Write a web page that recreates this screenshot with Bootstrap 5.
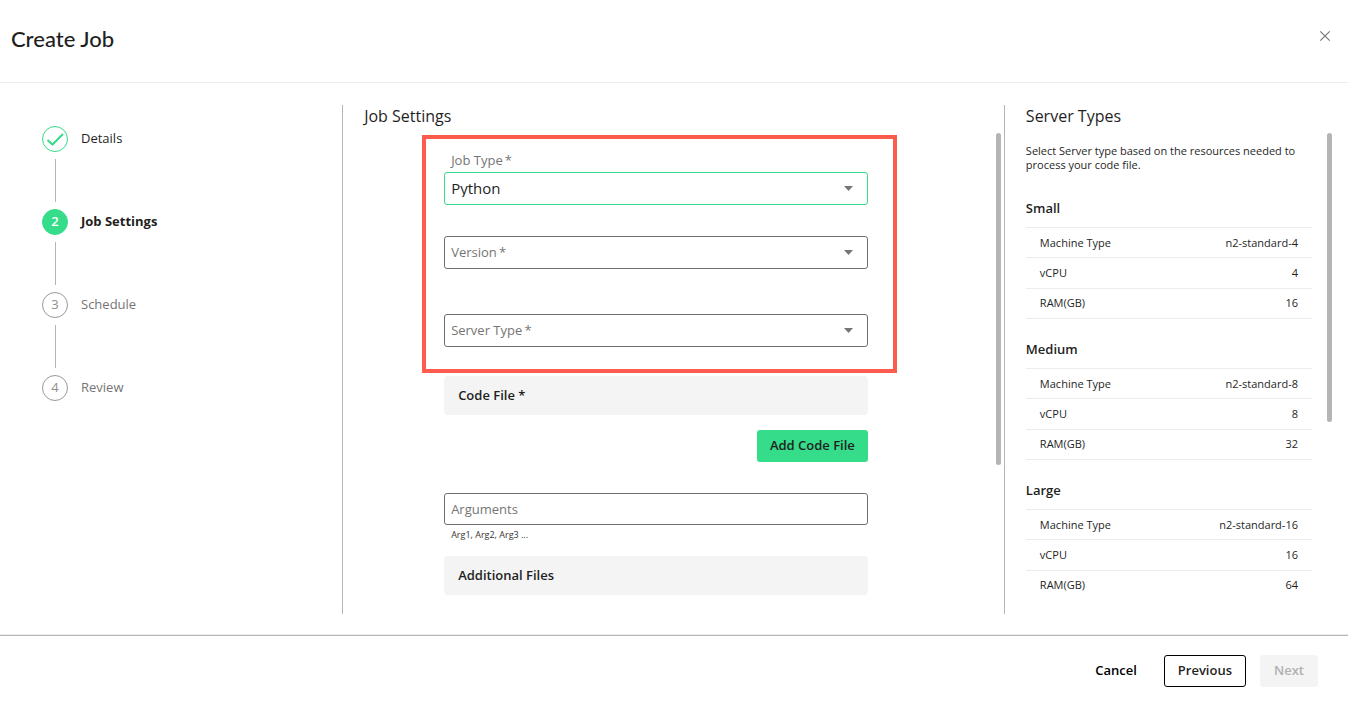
<!DOCTYPE html>
<html lang="en">
<head>
<meta charset="utf-8">
<meta name="viewport" content="width=device-width, initial-scale=1">
<title>Create Job</title>
<link rel="stylesheet" href="https://cdn.jsdelivr.net/npm/bootstrap@5.3.0/dist/css/bootstrap.min.css">
<style>
  :root { --brand: #35dc8a; --ink: #1f1f1f; --muted-ink: #757575; --rule: #b5b5b5; --hair: #ececec; --fill: #f4f4f4; }
  body { font-family: "Open Sans", "Noto Sans", sans-serif; font-size: 13px; line-height: 18px; color: var(--ink); }
  .page-head { padding: 0 16px 0 11px; height: 83px; border-bottom: 1px solid var(--hair); }
  .page-title { font-family: Lato, Inter, sans-serif; font-size: 22px; line-height: 28px; font-weight: 500; margin: 25px 0 0; }
  .close-x { margin-top: 29px; width: 14px; height: 14px; }
  .wizard { display: grid; grid-template-columns: 14fr 27fr 14fr; padding: 22px 0 21px; }
  .pane-line { border-right: 1px solid var(--rule); }
  .pane-title { font-size: 16px; line-height: 22px; font-weight: 400; margin: 0 0 6px; }

  .steps { padding: 21px 0 0 42px; }
  .step-item { gap: 13px; color: var(--muted-ink); text-decoration: none; }
  .step-dot { width: 26px; height: 26px; border: 1px solid #999; border-radius: 50%; color: #8e8e8e; }
  .step-item, .step-dot { line-height: 16px; }
  .step-text, .step-num { padding-bottom: 2px; }
  .step-done { color: var(--ink); }
  .step-done .step-dot { border-color: var(--brand); }
  .step-now { color: var(--ink); font-weight: 700; }
  .step-now .step-dot { background: var(--brand); border-color: var(--brand); color: #fff; font-weight: 600; }
  .step-link { width: 1px; height: 43px; margin: 7px 0 7px 13px; background: var(--rule); }

  .settings { padding-left: 21px; }
  .settings-form { margin: 0 128px 0 80px; padding-top: 2px; }
  .callout-box { border: 4px solid #fd5b4e; padding: 12px 25px 22px 18px; margin: 0 -29px 3px -22px; }
  .field-label { color: var(--muted-ink); padding-left: 7px; margin-bottom: 3px; display: block; }
  .field-wrap { position: relative; }
  .field-wrap .field-label { position: absolute; top: 7px; left: 0; margin: 0; pointer-events: none; }
  .wrap-version { margin-top: 31px; }
  .wrap-server { margin-top: 45px; }
  .field { display: block; width: 100%; height: 33px; padding: 0 30px 2px 6px; border: 1px solid #6e6e6e; border-radius: 3px; background-color: #fff; color: var(--ink); font-size: 13px; line-height: 18px; }
  input.field { height: 32px; }
  select.field { appearance: none; background-repeat: no-repeat; background-position: right 14px center;
    background-image: url("data:image/svg+xml,%3Csvg xmlns='http://www.w3.org/2000/svg' width='9' height='5'%3E%3Cpath d='M0 0h9L4.500 5z' fill='%23757575'/%3E%3C/svg%3E"); }
  .field.field-picked { border-color: var(--brand); font-size: 15px; }
  .field-hint { font-size: 9px; line-height: 12px; padding-left: 7px; margin: 4px 0 15px; color: #333; }
  .band { background: var(--fill); border-radius: 4px; font-size: 13px; line-height: 18px; font-weight: 600; padding: 10px 14px 11px; margin: 0; }
  .add-row { margin: 15px 0 31px; }
  .act { height: 32px; font-size: 13px; line-height: 18px; font-weight: 600; border-radius: 3px; padding: 0 13px 2px; }
  .act-brand { background: var(--brand); color: var(--ink); }
  .act-line { border: 1px solid #000; color: var(--ink); }
  .act.act-off { background: var(--fill); color: #b0b0b0; border: 0; opacity: 1; padding: 0 14px 2px; }

  .thumb { width: 5px; border-radius: 3px; background: var(--rule); flex: none; }
  .thumb-mid { height: 69%; margin-right: 3px; }
  .thumb-side { height: 60%; margin: 0 16px 0 15px; }

  .servers { padding-left: 21px; }
  .servers-note { font-size: 11px; line-height: 14px; margin: 11px 0 27px; }
  .server-size { font-size: 13px; line-height: 18px; font-weight: 600; margin: 0 0 10px; }
  .specs { height: 92px; font-size: 11px; line-height: 14px; margin-bottom: 21px; border-collapse: collapse; }
  .specs tr { border-top: 1px solid var(--hair); border-bottom: 1px solid var(--hair); }
  .specs th, .specs td { padding: 0 14px; font-weight: 400; vertical-align: middle; }
  .specs-last { margin-bottom: 0; }
  .specs-last tr:last-child { border-bottom-color: transparent; }

  .page-foot { border-top: 1px solid var(--rule); box-shadow: 0 -1px 0 #ededed; padding: 19px 30px 14px; gap: 14px; }
</style>
</head>
<body>
<div class="d-flex flex-column min-vh-100">
  <header class="page-head d-flex justify-content-between align-items-start">
    <h1 class="page-title">Create Job</h1>
    <button type="button" class="close-x btn p-0 border-0 d-flex" aria-label="Close">
      <svg width="14" height="14" viewBox="0 0 14 14" fill="none" stroke="#757575" stroke-width="1.200"><path d="M2.300 2.300l9.400 9.400M11.700 2.300l-9.400 9.400"/></svg>
    </button>
  </header>

  <main class="wizard flex-grow-1">
    <nav class="steps pane-line" aria-label="Progress">
      <a href="#" class="step-item step-done d-flex align-items-center"><span class="step-dot d-flex align-items-center justify-content-center"><svg width="20" height="18" viewBox="0 0 20 18" fill="none" stroke="#35dc8a" stroke-width="2"><path d="M2.500 10l5 4.500L18 4"/></svg></span><span class="step-text">Details</span></a>
      <div class="step-link"></div>
      <a href="#" class="step-item step-now d-flex align-items-center" aria-current="step"><span class="step-dot d-flex align-items-center justify-content-center"><span class="step-num">2</span></span><span class="step-text">Job Settings</span></a>
      <div class="step-link"></div>
      <a href="#" class="step-item d-flex align-items-center"><span class="step-dot d-flex align-items-center justify-content-center"><span class="step-num">3</span></span><span class="step-text">Schedule</span></a>
      <div class="step-link"></div>
      <a href="#" class="step-item d-flex align-items-center"><span class="step-dot d-flex align-items-center justify-content-center"><span class="step-num">4</span></span><span class="step-text">Review</span></a>
    </nav>

    <section class="settings pane-line d-flex flex-column">
      <h2 class="pane-title">Job Settings</h2>
      <div class="d-flex flex-grow-1">
        <form class="settings-form flex-grow-1">
          <div class="callout-box">
            <label class="field-label" for="jobType">Job Type&thinsp;*</label>
            <select class="field field-picked" id="jobType"><option>Python</option></select>
            <div class="field-wrap wrap-version">
              <select class="field" id="version"><option value=""></option></select>
              <label class="field-label" for="version">Version&thinsp;*</label>
            </div>
            <div class="field-wrap wrap-server">
              <select class="field" id="serverType"><option value=""></option></select>
              <label class="field-label" for="serverType">Server Type&thinsp;*</label>
            </div>
          </div>
          <h3 class="band">Code File *</h3>
          <div class="add-row d-flex justify-content-end">
            <button type="button" class="btn act act-brand border-0">Add Code File</button>
          </div>
          <div class="field-wrap">
            <input class="field" id="args" type="text">
            <label class="field-label" for="args">Arguments</label>
          </div>
          <p class="field-hint">Arg1, Arg2, Arg3 ...</p>
          <h3 class="band">Additional Files</h3>
        </form>
        <div class="thumb thumb-mid"></div>
      </div>
    </section>

    <aside class="servers d-flex flex-column">
      <h2 class="pane-title">Server Types</h2>
      <div class="d-flex flex-grow-1">
        <div class="flex-grow-1">
          <p class="servers-note">Select Server type based on the resources needed to process your code file.</p>
          <h3 class="server-size">Small</h3>
          <table class="specs w-100">
            <tr><th scope="row">Machine Type</th><td class="text-end">n2-standard-4</td></tr>
            <tr><th scope="row">vCPU</th><td class="text-end">4</td></tr>
            <tr><th scope="row">RAM(GB)</th><td class="text-end">16</td></tr>
          </table>
          <h3 class="server-size">Medium</h3>
          <table class="specs w-100">
            <tr><th scope="row">Machine Type</th><td class="text-end">n2-standard-8</td></tr>
            <tr><th scope="row">vCPU</th><td class="text-end">8</td></tr>
            <tr><th scope="row">RAM(GB)</th><td class="text-end">32</td></tr>
          </table>
          <h3 class="server-size">Large</h3>
          <table class="specs specs-last w-100">
            <tr><th scope="row">Machine Type</th><td class="text-end">n2-standard-16</td></tr>
            <tr><th scope="row">vCPU</th><td class="text-end">16</td></tr>
            <tr><th scope="row">RAM(GB)</th><td class="text-end">64</td></tr>
          </table>
        </div>
        <div class="thumb thumb-side"></div>
      </div>
    </aside>
  </main>

  <footer class="page-foot d-flex justify-content-end">
    <button type="button" class="btn act border-0 text-black">Cancel</button>
    <button type="button" class="btn act act-line">Previous</button>
    <button type="button" class="btn act act-off" disabled>Next</button>
  </footer>
</div>
<script src="https://cdn.jsdelivr.net/npm/bootstrap@5.3.0/dist/js/bootstrap.bundle.min.js"></script>
</body>
</html>
